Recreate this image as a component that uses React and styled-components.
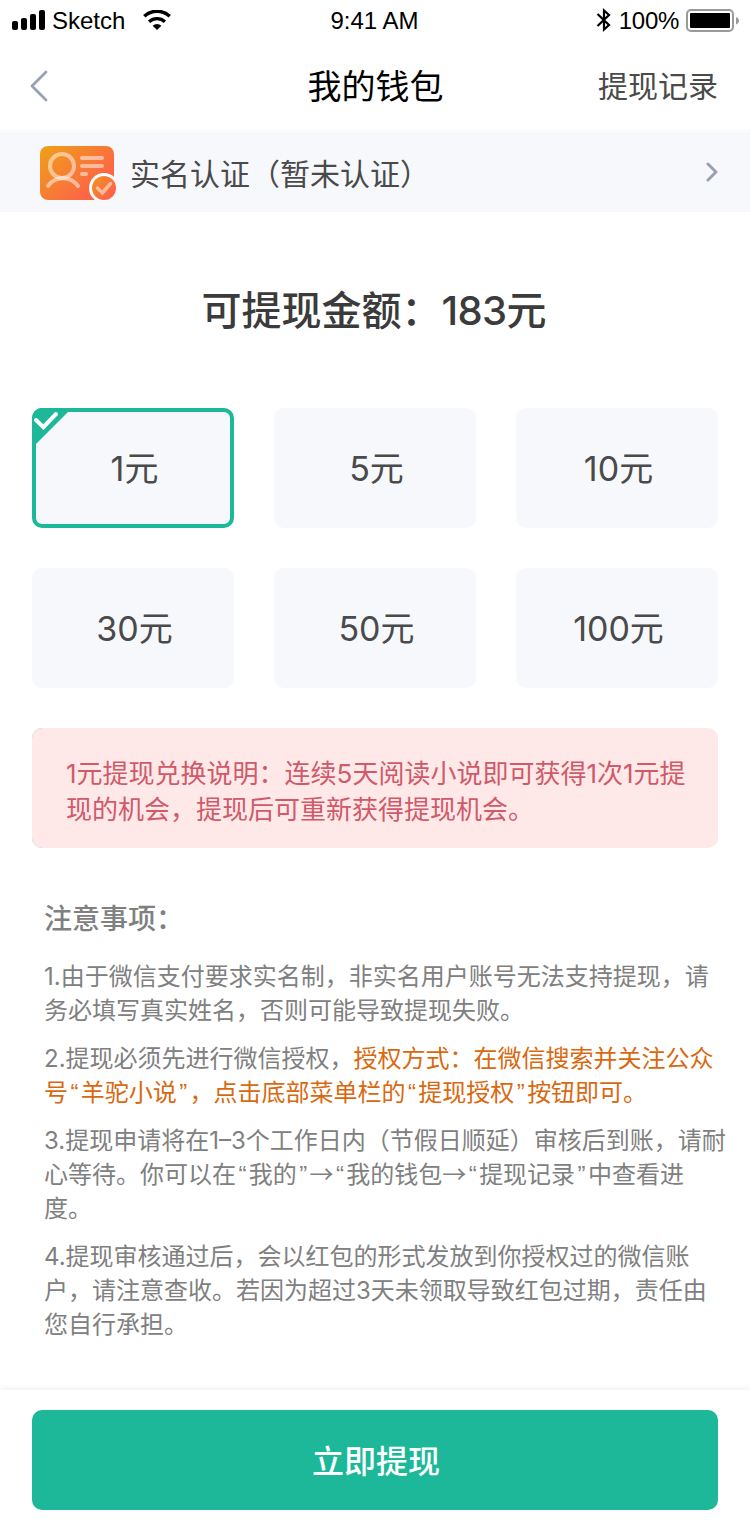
import React from "react";
import styled, { createGlobalStyle } from "styled-components";

const GlobalStyle = createGlobalStyle`
  * { box-sizing: border-box; }
  body {
    margin: 0;
    background: #fff;
    font-family: Inter, "Noto Sans CJK SC", sans-serif;
    font-weight: 380;
  }
`;

const Screen = styled.main`
  width: 750px;
  height: 1530px;
  display: flex;
  flex-direction: column;
  background: #fff;
  overflow: hidden;
`;

const StatusBar = styled.div`
  height: 40px;
  padding: 0 10px 0 12px;
  display: grid;
  grid-template-columns: 1fr auto 1fr;
  align-items: center;
  font: 24px/40px "Liberation Sans", Arial, sans-serif;
  color: #000;
`;

const StatusGroup = styled.div`
  display: flex;
  align-items: center;
  justify-content: ${(p) => (p.$end ? "flex-end" : "flex-start")};
  svg { flex: none; }
`;

const StatusText = styled.span`
  height: 40px;
  padding-top: 1px;
  letter-spacing: ${(p) => p.$track || 0}px;
  margin: ${(p) => p.$margin || 0};
`;

const NavBar = styled.header`
  height: 92px;
  padding: 0 32px 0 30px;
  display: grid;
  grid-template-columns: 1fr auto 1fr;
  align-items: center;
  box-shadow: inset 0 -1px #fff, inset 0 -2px #f8f9fc;
`;

const BackButton = styled.button`
  border: 0;
  padding: 0;
  background: none;
  display: flex;
`;

const NavTitle = styled.h1`
  margin: 0;
  padding: 2px 0 0 3px;
  font-size: 34px;
  font-weight: 400;
  line-height: 48px;
  color: #000;
`;

const NavLink = styled.a`
  justify-self: end;
  font-size: 30px;
  line-height: 42px;
  color: #4a4a4a;
`;

const VerifyRow = styled.section`
  height: 80px;
  padding: 2px 32px 0 40px;
  display: flex;
  align-items: center;
  background: #f6f8fc;
`;

const VerifyLabel = styled.span`
  flex: 1;
  margin-left: 12px;
  padding-top: 1px;
  font-size: 30px;
  line-height: 42px;
  color: #4a4a4a;
`;

const Balance = styled.h2`
  margin: 71px 0 0;
  padding-right: 2px;
  height: 56px;
  text-align: center;
  font-size: 40px;
  font-weight: 500;
  line-height: 56px;
  color: #3b3b3b;
`;

const BalanceValue = styled.span`
  font-weight: 450;
  letter-spacing: -0.700px;
`;

const AmountGrid = styled.div`
  margin: 69px 32px 0;
  display: grid;
  grid-template-columns: repeat(3, 202px);
  grid-auto-rows: 120px;
  gap: 40px;
`;

const AmountCard = styled.button`
  position: relative;
  padding: 1px 0 0 3px;
  border: 4px solid ${(p) => (p.$selected ? "#1cb899" : "#f6f8fc")};
  border-radius: 10px;
  background: #f6f8fc;
  font: 380 34px/48px Inter, "Noto Sans CJK SC", sans-serif;
  color: #4a4a4a;
`;

const SelectedMark = styled.svg`
  position: absolute;
  left: -4px;
  top: -4px;
`;

const NoticeEdge = styled.div`
  margin: 40px 32px 0;
  border-radius: 10px;
  background: linear-gradient(90deg, #5fcbb4 12px, transparent 12px);
`;

const Notice = styled.p`
  margin: 0;
  height: 120px;
  padding: 28px 0 0 34px;
  border-radius: 10px;
  background: #fee9e8;
  font-size: 26px;
  line-height: 36px;
  color: #d0596a;
`;

const Rules = styled.section`
  margin: 51px 0 0 44px;
  font-size: 24px;
  line-height: 34px;
  color: #808080;
`;

const RulesTitle = styled.h3`
  margin: 0 0 21px;
  font-size: 28px;
  font-weight: 500;
  line-height: 40px;
`;

const Rule = styled.p`
  margin: 0 0 14px;
`;

const Line = styled.span`
  display: block;
  height: 1lh;
  white-space: nowrap;
`;

const Highlight = styled.span`
  color: #d8690f;
`;

const Quote = styled.span`
  padding: 0 2.4px;
  font-family: "Liberation Sans", sans-serif;
  line-height: 0;
`;

const Arrow = styled.span`
  font-family: "Noto Sans CJK SC", sans-serif;
  line-height: 0;
`;

const Footer = styled.footer`
  margin-top: auto;
  height: 140px;
  padding: 20px 32px;
  background: #fff;
  box-shadow: 0 -2px 6px rgba(0, 0, 0, 0.06);
`;

const SubmitButton = styled.button`
  width: 100%;
  height: 100px;
  padding: 4px 0 0 2px;
  border: 0;
  border-radius: 10px;
  background: #1cb899;
  color: #fff;
  font: 500 32px/46px Inter, "Noto Sans CJK SC", sans-serif;
`;

const SignalIcon = () => (
  <svg width="34" height="20" viewBox="0 0 34 20">
    <rect x="0" y="11" width="6" height="9" rx="2" />
    <rect x="9" y="8" width="6" height="12" rx="2" />
    <rect x="18" y="4" width="6" height="16" rx="2" />
    <rect x="27" y="0" width="6" height="20" rx="2" />
  </svg>
);

const WifiIcon = () => (
  <svg width="28" height="20" viewBox="0 0 28 20">
    <path d="M1.3 6.3a18.6 18.6 0 0 1 25.4 0" fill="none" stroke="#000" strokeWidth="3.5" />
    <path d="M6.1 11.7a11.8 11.8 0 0 1 15.8 0" fill="none" stroke="#000" strokeWidth="3.3" />
    <path d="M9.6 15.7a6.6 6.6 0 0 1 8.8 0L14 20z" />
  </svg>
);

const BluetoothIcon = () => (
  <svg width="16" height="24" viewBox="0 0 16 24" fill="none" stroke="#000" strokeWidth="2.2">
    <path d="M1.500 6 13 17 8 21.500V2.500L13 7 1.500 18" />
  </svg>
);

const BatteryIcon = () => (
  <svg width="54" height="24" viewBox="0 0 54 24">
    <rect x="1" y="2" width="46" height="21" rx="4" fill="none" stroke="#999" strokeWidth="2" />
    <rect x="4" y="5" width="40" height="15" rx="1" />
    <path d="M50 9c4 1.500 4 6 0 7.500z" fill="#999" />
  </svg>
);

const BackIcon = () => (
  <svg width="20" height="34" viewBox="0 0 20 34">
    <path d="M16 3 2 17 16 31" fill="none" stroke="#98a1b3" strokeWidth="2.800" strokeLinecap="round" strokeLinejoin="round" />
  </svg>
);

const ForwardIcon = () => (
  <svg width="12" height="22" viewBox="0 0 12 22">
    <path d="M2 2 10 10 2 18" fill="none" stroke="#98a1b3" strokeWidth="3" strokeLinecap="round" strokeLinejoin="round" />
  </svg>
);

const IdCardIcon = () => (
  <svg width="78" height="54" viewBox="0 0 78 54">
    <defs>
      <linearGradient id="card" x1="0" y1="0" x2="1" y2="0.8">
        <stop offset="0" stopColor="#efa017" />
        <stop offset="1" stopColor="#ff5a4f" />
      </linearGradient>
      <linearGradient id="badge" x1="0" y1="0" x2="1" y2="1">
        <stop offset="0" stopColor="#f39420" />
        <stop offset="1" stopColor="#ff5852" />
      </linearGradient>
      <clipPath id="plate"><rect width="74" height="54" rx="8" /></clipPath>
    </defs>
    <g clipPath="url(#plate)">
      <rect width="74" height="54" fill="url(#card)" />
      <circle cx="64" cy="42" r="15" fill="#fff" />
    </g>
    <g fill="none" stroke="#fff" strokeOpacity="0.5" strokeWidth="4" strokeLinecap="round">
      <circle cx="22" cy="20" r="12" />
      <path d="M8 40A18.500 18.500 0 0 1 38 40" />
      <path d="M42 12h20M42 20h20M42 28h4" />
    </g>
    <circle cx="64" cy="42" r="12" fill="url(#badge)" />
    <path d="M57.500 42 62.500 47 70.500 37.500" fill="none" stroke="#fff" strokeOpacity="0.5" strokeWidth="3.500" strokeLinecap="round" />
  </svg>
);

const CheckCorner = () => (
  <SelectedMark width="40" height="40" viewBox="0 0 40 40">
    <path d="M0 10A10 10 0 0 1 10 0H40L0 40Z" fill="#1cb899" />
    <path d="M4 12 11.400 19.200 24 6" fill="none" stroke="#fff" strokeWidth="4" strokeLinecap="round" />
  </SelectedMark>
);

const amounts = [1, 5, 10, 30, 50, 100];

export default function App() {
  return (
    <Screen>
      <GlobalStyle />
      <StatusBar>
        <StatusGroup>
          <SignalIcon />
          <StatusText $margin="0 18px 0 6px">Sketch</StatusText>
          <WifiIcon />
        </StatusGroup>
        <StatusText $margin="0 3px 0 0">9:41 AM</StatusText>
        <StatusGroup $end>
          <BluetoothIcon />
          <StatusText $track={-0.3} $margin="0 7px 0 7px">100%</StatusText>
          <BatteryIcon />
        </StatusGroup>
      </StatusBar>
      <NavBar>
        <BackButton aria-label="返回"><BackIcon /></BackButton>
        <NavTitle>我的钱包</NavTitle>
        <NavLink>提现记录</NavLink>
      </NavBar>
      <VerifyRow>
        <IdCardIcon />
        <VerifyLabel>实名认证（暂未认证）</VerifyLabel>
        <ForwardIcon />
      </VerifyRow>
      <Balance>可提现金额：<BalanceValue>183</BalanceValue>元</Balance>
      <AmountGrid>
        {amounts.map((n) => (
          <AmountCard key={n} $selected={n === 1}>
            {n === 1 && <CheckCorner />}
            {n}元
          </AmountCard>
        ))}
      </AmountGrid>
      <NoticeEdge>
        <Notice>
          <Line>1元提现兑换说明：连续5天阅读小说即可获得1次1元提</Line>
          <Line>现的机会，提现后可重新获得提现机会。</Line>
        </Notice>
      </NoticeEdge>
      <Rules>
        <RulesTitle>注意事项：</RulesTitle>
        <Rule>
          <Line>1.由于微信支付要求实名制，非实名用户账号无法支持提现，请</Line>
          <Line>务必填写真实姓名，否则可能导致提现失败。</Line>
        </Rule>
        <Rule>
          <Line>2.提现必须先进行微信授权，<Highlight>授权方式：在微信搜索并关注公众</Highlight></Line>
          <Line>
            <Highlight>
              号<Quote>“</Quote>羊驼小说<Quote>”</Quote>，点击底部菜单栏的<Quote>“</Quote>提现授权<Quote>”</Quote>按钮即可。
            </Highlight>
          </Line>
        </Rule>
        <Rule>
          <Line>3.提现申请将在1–3个工作日内（节假日顺延）审核后到账，请耐</Line>
          <Line>
            心等待。你可以在<Quote>“</Quote>我的<Quote>”</Quote><Arrow>→</Arrow><Quote>“</Quote>我的钱包<Arrow>→</Arrow><Quote>“</Quote>提现记录<Quote>”</Quote>中查看进
          </Line>
          <Line>度。</Line>
        </Rule>
        <Rule>
          <Line>4.提现审核通过后，会以红包的形式发放到你授权过的微信账</Line>
          <Line>户，请注意查收。若因为超过3天未领取导致红包过期，责任由</Line>
          <Line>您自行承担。</Line>
        </Rule>
      </Rules>
      <Footer>
        <SubmitButton>立即提现</SubmitButton>
      </Footer>
    </Screen>
  );
}
